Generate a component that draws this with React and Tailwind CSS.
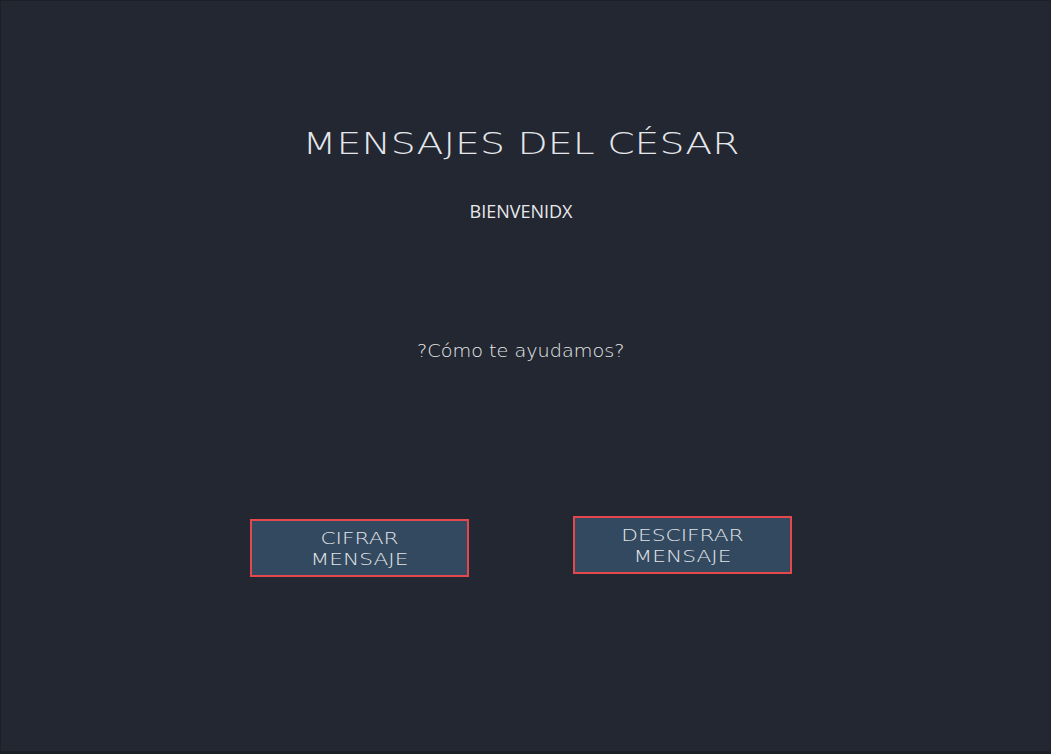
export default function App() {
  return (
    <div className="w-[1051px] h-[754px] bg-[#222731] border border-[#1b1f26] border-b-[3px]">
      <div className="mr-[9px] flex flex-col items-center text-[#e4e6ea]">
        <h1 className="mt-[124px] font-['DejaVu_Sans',sans-serif] text-[31px] leading-[36px] font-extralight scale-x-[1.27]">
          MENSAJES DEL CÉSAR
        </h1>
        <p className="mt-[38px] font-['Open_Sans',sans-serif] text-[18px] leading-[24px] text-[#e8e9ec]">
          BIENVENIDX
        </p>
        <p className="mt-[117px] font-['DejaVu_Sans',sans-serif] text-[17px] leading-[22px] font-extralight text-[#e6e7ea] scale-x-[1.13]">
          ?Cómo te ayudamos?
        </p>
        <div className="mt-[154px] w-[542px] flex justify-between items-start">
          <button className="mt-[3px] w-[219px] h-[58px] pt-[3px] bg-[#33495f] border-2 border-[#e4474c] font-['DejaVu_Sans',sans-serif] text-[15.5px] leading-[21px] font-extralight text-[#e2e5ea]">
            <span className="block scale-x-[1.4]">CIFRAR<br />MENSAJE</span>
          </button>
          <button className="w-[219px] h-[58px] pt-[3px] bg-[#33495f] border-2 border-[#e4474c] font-['DejaVu_Sans',sans-serif] text-[15.5px] leading-[21px] font-extralight text-[#e2e5ea]">
            <span className="block scale-x-[1.4]">DESCIFRAR<br />MENSAJE</span>
          </button>
        </div>
      </div>
    </div>
  );
}
